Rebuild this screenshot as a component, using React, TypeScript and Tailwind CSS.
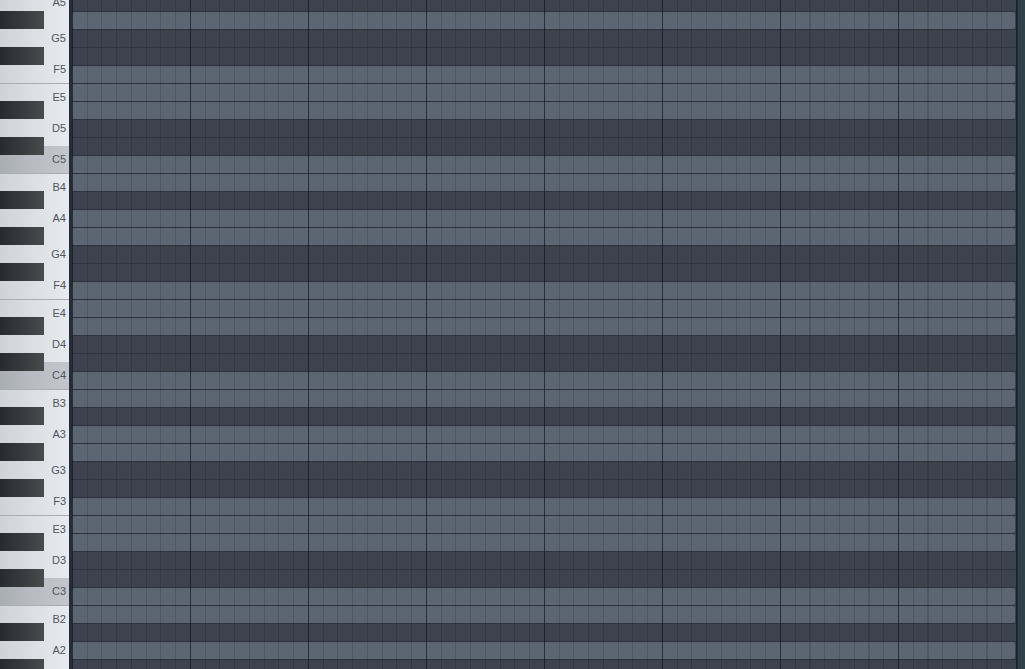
import React from "react";

const ROWS: string[] = (() => {
  const oct = ["B", "A#", "A", "G#", "G", "F#", "F", "E", "D#", "D", "C#", "C"];
  const r: string[] = ["A5", "G#5", "G5", "F#5", "F5", "E5", "D#5", "D5", "C#5", "C5"];
  for (const o of [4, 3]) for (const n of oct) r.push(n + o);
  r.push("B2", "A#2", "A2", "G#2");
  return r;
})();

const LIGHT = new Set([
  "G#5", "F5", "E5", "D#5", "C5",
  "B4", "A4", "G#4", "F4", "E4", "D#4", "C4",
  "B3", "A3", "G#3", "F3", "E3", "D#3", "C3",
  "B2", "A2",
]);

const WHITE: string[] = (() => {
  const r: string[] = [];
  for (const o of [5, 4, 3]) for (const n of ["B", "A", "G", "F", "E", "D", "C"]) r.push(n + o);
  r.push("B2", "A2", "G2");
  return r;
})();

function WhiteKey({ name }: { name: string }) {
  const n = name[0];
  const tall = n === "A" || n === "G" || n === "D";
  const isC = n === "C";
  const sep = n === "B" || n === "E";
  return (
    <div
      className={
        "flex items-center justify-end pr-[3px] shrink-0 " +
        (tall ? "h-[36px] " : "h-[27px] ") +
        (sep ? "border-t border-[#a9adb5] " : "") +
        (isC
          ? "bg-linear-to-r from-[#a9adb4] via-[#b9bcc2] to-[#c3c6cc]"
          : "bg-linear-to-r from-[#cfd2d7] via-[#dcdfe4] to-[#e7eaef]")
      }
    >
      <span className="text-[11px] leading-none text-[#50555e] font-['Liberation_Sans',Arial,sans-serif]">
        {name}
      </span>
    </div>
  );
}

export default function App() {
  return (
    <div className="flex h-[669px] w-full overflow-hidden bg-[#3d434e]">
      {/* Piano keyboard */}
      <div className="relative w-[69px] shrink-0 overflow-hidden bg-[#e3e6eb]">
        <div className="mt-[-43px] flex flex-col">
          {WHITE.map((w) => (
            <WhiteKey key={w} name={w} />
          ))}
        </div>
        <div className="absolute left-0 right-0 top-[-7px] flex flex-col pointer-events-none">
          {ROWS.map((r) => (
            <div key={r} className="h-[18px] shrink-0">
              {r.includes("#") && (
                <div className="h-[18px] w-[44px] bg-linear-to-r from-[#272a31] via-[#393a3e] to-[#4a4a4c]" />
              )}
            </div>
          ))}
        </div>
      </div>
      <div className="w-[3px] shrink-0 bg-[#272d36]" />

      {/* Grid */}
      <div className="relative flex-1 overflow-hidden bg-[#3d434e]">
        <div className="mt-[-7px] flex flex-col">
          {ROWS.map((r) => (
            <div key={r} className="flex h-[18px] shrink-0 border-t border-[#2d343e] bg-[#3d434e]">
              {LIGHT.has(r) && (
                <div className="mr-[2px] flex-1 rounded-r-[2px] bg-[#5c6672]" />
              )}
            </div>
          ))}
        </div>
        <div className="pointer-events-none absolute inset-0 bg-[repeating-linear-gradient(90deg,rgba(10,14,22,0.55)_0px,rgba(10,14,22,0.55)_1px,transparent_1px,transparent_118px),repeating-linear-gradient(90deg,rgba(0,0,0,0.14)_0px,rgba(0,0,0,0.14)_1px,transparent_1px,transparent_14.75px)]" />
      </div>

      {/* Right strip */}
      <div className="w-[8px] shrink-0 border-l border-[#1f2a32] bg-[#304049]" />
    </div>
  );
}
